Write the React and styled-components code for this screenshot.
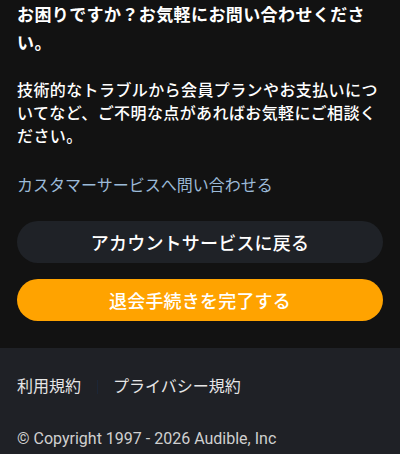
import React from 'react';
import styled, { createGlobalStyle } from 'styled-components';

const GlobalStyle = createGlobalStyle`
  html, body {
    margin: 0;
    padding: 0;
    background: #121212;
  }
  body {
    font-family: "Noto Sans CJK JP", "Noto Sans", sans-serif;
    color: #ffffff;
  }
`;

const Page = styled.div`
  width: 400px;
  display: flex;
  flex-direction: column;
`;

const Main = styled.main`
  background: #121212;
  padding: 0 17px 27px;
  display: flex;
  flex-direction: column;
`;

const Heading = styled.h2`
  margin: 0;
  font-size: 17px;
  font-weight: 700;
  line-height: 28px;
  letter-spacing: 0.4px;
`;

const Body = styled.p`
  margin: 22px 0 0;
  font-size: 16px;
  font-weight: 500;
  line-height: 23px;
  letter-spacing: 0.4px;
`;

const ContactLink = styled.a`
  margin-top: 25px;
  font-size: 16px;
  line-height: 24px;
  color: #9cbad8;
  text-decoration: none;
`;

const Actions = styled.div`
  margin-top: 25px;
  display: flex;
  flex-direction: column;
  gap: 16px;
`;

const Button = styled.button`
  height: 42px;
  border: none;
  border-radius: 21px;
  font-family: inherit;
  font-size: 18px;
  font-weight: 500;
  letter-spacing: 0.2px;
  color: #ffffff;
  background: ${({ $primary }) => ($primary ? '#ffa300' : '#1f2227')};
`;

const Footer = styled.footer`
  background: #1f2126;
  padding: 26px 17px 0;
  height: 107px;
  box-sizing: border-box;
`;

const FooterLinks = styled.nav`
  display: flex;
  align-items: center;
`;

const FooterLink = styled.a`
  font-size: 16px;
  line-height: 22px;
  color: #e6e6e6;
  text-decoration: none;
`;

const Divider = styled.span`
  width: 1px;
  height: 14px;
  margin: 3px 15px 0 16px;
  background: #1c2636;
`;

const Copyright = styled.div`
  margin-top: 33px;
  font-family: Roboto, "Noto Sans", sans-serif;
  font-size: 16px;
  color: #d0d0d0;
`;

export default function App() {
  return (
    <Page>
      <GlobalStyle />
      <Main>
        <Heading>お困りですか？お気軽にお問い合わせください。</Heading>
        <Body>
          技術的なトラブルから会員プランやお支払いについてなど、ご不明な点があればお気軽にご相談ください。
        </Body>
        <ContactLink href="#">カスタマーサービスへ問い合わせる</ContactLink>
        <Actions>
          <Button>アカウントサービスに戻る</Button>
          <Button $primary>退会手続きを完了する</Button>
        </Actions>
      </Main>
      <Footer>
        <FooterLinks>
          <FooterLink href="#">利用規約</FooterLink>
          <Divider />
          <FooterLink href="#">プライバシー規約</FooterLink>
        </FooterLinks>
        <Copyright>© Copyright 1997 - 2026 Audible, Inc</Copyright>
      </Footer>
    </Page>
  );
}
